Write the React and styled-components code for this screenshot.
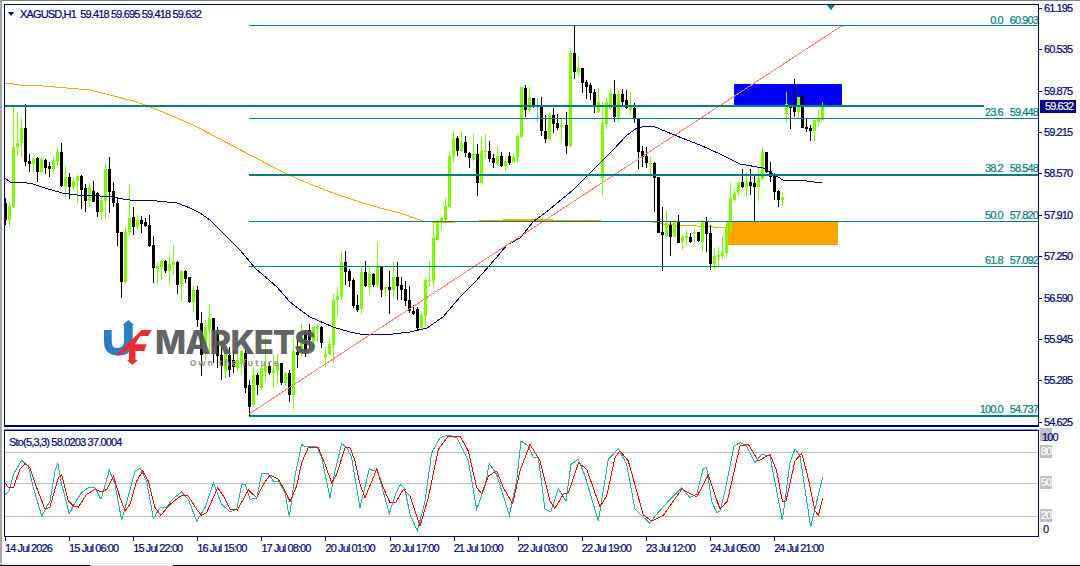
import React from "react";
import styled, { createGlobalStyle } from "styled-components";

const GlobalStyle = createGlobalStyle`
  html, body { margin: 0; padding: 0; background: #fff; }
  body { font-family: "Liberation Sans", Arial, sans-serif; overflow: hidden; }
`;

const NAVY = "#000080";
const TEAL = "#008080";
const GREEN = "#7cfc00";

/* ---------- data: [high, bodyTop, bodyBottom, low, colour] as read from the reference ---------- */
const seg = (off, rows) => rows.map((r) => [off + r[0] / 3, off + r[1] / 3, off + r[2] / 3, off + r[3] / 3, r[4]]);

const candles = [
  ...seg(0, [
    [595,608,660,675,0],[605,618,660,680,1],[315,440,620,625,1],[335,430,440,468,1],[355,383,430,470,1],
    [312,383,485,497,0],[462,483,491,515,0],[475,477,491,515,1],[470,475,515,545,0],[470,477,515,520,1],
    [478,480,505,522,0],[485,497,507,530,0],[472,483,507,520,1],[445,455,485,497,1],[430,455,558,560,0],
    [497,530,558,590,1],[520,530,560,598,0],[530,543,562,570,1],[525,528,543,608,1],[525,528,570,628,0],
    [552,563,603,635,0],[548,562,603,622,1],[543,573,605,607,0],[575,578,635,650,0],[590,600,635,660,1],
    [490,507,602,660,1],[472,507,575,640,0],[545,573,608,620,0],[590,608,700,738,0],
  ]),
  ...seg(220, [
    [35,35,185,235,0],[20,35,187,190,1],[-108,-7,35,45,1],[-40,-10,22,45,0],[-15,0,22,30,1],[-12,0,12,38,0],
    [-5,5,18,22,0],[-15,15,78,82,0],[48,75,145,190,0],[125,137,147,193,1],[120,122,142,180,1],[120,123,152,160,0],
    [105,132,152,195,1],[75,125,135,165,1],[122,125,195,222,0],[150,152,193,243,1],[150,153,178,190,0],
    [170,172,245,250,0],[197,210,245,275,1],[197,210,300,320,0],[275,310,405,467,0],[300,320,385,420,1],
    [252,295,330,395,1],[295,295,380,430,0],[320,340,408,445,0],[380,405,438,480,0],[390,400,452,475,1],
    [380,405,450,470,0],[390,420,440,460,0],[395,420,445,455,1],[390,392,432,465,1],[390,398,503,520,0],
    [480,495,560,585,0],[440,465,555,560,1],[460,465,495,525,0],[435,445,505,510,1],[350,437,455,485,1],
    [430,437,458,465,0],[405,450,458,505,1],[402,430,452,490,1],[428,430,490,495,0],[455,460,490,495,1],
    [450,460,525,545,0],[350,392,525,567,1],[355,395,405,445,0],[312,350,400,410,1],[330,340,395,410,0],
    [312,330,360,385,0],[320,322,365,385,1],[312,318,328,365,1],[318,320,370,385,0],[380,402,412,440,1],
    [355,372,402,405,1],[222,240,375,430,1],[200,228,240,290,1],[95,125,230,240,1],[93,125,155,195,0],
    [148,152,182,200,0],[175,180,258,265,0],[225,255,270,275,0],
  ]),
  ...seg(170, [
    [290,305,418,432,1],[272,305,348,352,0],[290,312,350,372,1],[310,312,345,350,0],[215,290,345,350,1],
    [290,290,360,380,0],[350,350,358,382,1],[303,350,360,432,0],[275,320,360,380,1],[275,320,348,390,0],
    [320,345,360,390,0],[333,358,392,408,0],[348,390,422,430,0],[405,423,432,435,0],[410,417,473,480,0],
    [430,435,473,480,1],[325,330,437,470,1],[272,329,332,350,1],[155,205,332,350,1],[150,155,210,213,1],
    [142,145,155,180,1],[83,108,150,155,1],
  ]),
  ...seg(0, [
    [452,467,620,622,1],[397,413,470,485,1],[408,413,452,468,0],[395,430,452,455,1],[408,425,460,470,0],
    [455,460,475,503,0],[402,462,477,483,1],[432,462,550,587,0],[415,452,550,550,1],[402,452,455,475,1],
    [423,453,477,485,0],[462,475,490,503,0],[438,468,492,495,1],[455,468,497,500,0],[470,483,497,512,1],
    [455,468,490,495,0],[462,470,487,490,1],[402,407,473,490,1],[262,262,410,413,1],[255,265,330,350,0],
    [262,293,330,338,1],[293,293,320,325,0],[293,315,320,365,2],[292,315,392,408,0],[345,392,417,430,0],
    [340,345,417,420,1],[325,345,372,400,0],[343,368,383,390,0],[358,375,380,425,1],[337,375,437,462,0],
    [148,158,437,442,1],[75,158,215,237,0],[167,205,215,232,1],[203,205,250,278,0],[240,245,260,298,0],
    [250,255,280,300,0],[268,275,320,340,0],[265,305,335,340,1],[305,370,533,585,1],[295,305,372,387,1],
    [268,280,325,330,1],[240,282,350,365,0],[270,282,350,365,1],[268,282,305,315,0],[270,300,325,328,0],
    [275,322,330,345,1],[310,323,358,368,0],[355,358,455,507,0],[437,453,472,500,0],[440,468,490,505,0],
    [472,490,492,530,1],[485,490,533,635,0],[531,531,699,699,0],
  ]),
  ...seg(170, [
    [112,186,194,302,0],[123,160,197,200,1],[155,165,200,258,0],[150,152,200,202,1],[135,155,218,220,0],
    [195,200,215,240,1],[180,198,203,228,1],[190,200,215,218,0],[175,186,188,222,1],[185,185,213,216,0],
    [150,152,215,245,1],[142,155,193,245,0],[165,190,282,300,0],[235,258,282,300,1],[232,255,260,290,1],
    [198,245,258,270,1],[160,170,250,262,1],[40,85,183,190,1],[60,68,90,92,1],[35,38,70,77,1],
  ]),
  ...seg(0, [
    [507,547,562,565,0],[520,545,562,590,1],[507,545,557,585,0],[525,548,562,663,0],[505,535,562,602,1],
    [445,457,537,540,1],[455,457,515,520,0],[487,513,530,545,0],[520,523,575,600,0],[570,573,600,620,0],
    [578,592,600,617,1],[275,312,342,368,1],[320,315,325,387,0],[237,320,335,350,0],[290,292,335,353,1],
    [285,287,383,385,0],[357,380,387,397,0],[375,385,393,422,0],[360,360,392,422,1],[330,355,365,380,1],
    [305,315,360,360,1],
  ]),
];

const candleX = (i) => Math.floor(5.3 + 4 * i + (i >= 140 ? 1 : 0));
const candleFill = ["#000000", GREEN, "#3fdce8"];

const pts = (list) => list.map((p) => p.join(",")).join(" ");
const osc = (offX, list) => list.map(([x, y]) => [offX + x / 3, 420 + y / 3]);

const orangeA = [[5,83],[20,85],[43,86],[67,88],[90,90],[110,95],[133,101],[148,106],[170,115],[193,125],[220,139],[250,155],[283,172],[300,180],[333,193],[360,202],[380,208],[400,213],[423,221]];
const orangeRuns = [
  { x1: 432, x2: 455, y: 222, w: 1 },
  { x1: 479, x2: 503, y: 220, w: 1 },
  { x1: 503, x2: 553, y: 218.5, w: 2 },
  { x1: 553, x2: 601, y: 220, w: 1 },
];
const orangeB = [[653,222],[662,224],[680,225.5],[697,226],[713,227],[728,227.5]];
const navyMA = [[5,178],[10,182],[20,182],[33,184],[45,188],[62,193],[77,195],[100,196],[113,197],[123,199],[130,200],[157,201],[177,203],[190,208],[200,213],[210,220],[223,233],[240,250],[255,268],[277,287],[290,302],[310,317],[333,327],[350,332],[360,334],[377,334],[393,334],[410,332],[427,328],[443,317],[460,297],[475,282],[490,265],[507,245],[520,238],[533,222],[550,209],[573,190],[593,170],[613,150],[627,135],[637,128],[647,126],[653,126],[667,132],[687,140],[700,145],[720,154],[740,164],[763,168],[783,180],[803,180.5],[822,183]];

const tealOsc = [
  ...osc(0, [[15,220],[28,210],[40,160],[65,118],[85,135],[100,200],[125,285],[150,240],[165,150],[173,125],[185,190],[208,278],[225,245],[245,215],[265,200],[285,200],[303,235],[328,148],[345,190],[365,298],[385,225],[405,150],[420,142],[440,180],[460,292],[480,260],[500,258],[520,232],[545,213],[565,235],[590,300],[615,260],[640,185],[665,250],[690,272],[710,265],[725,190],[735,190],[750,235],[770,232],[785,158],[805,158],[820,180],[835,180],[855,215],[868,288],[885,165],[905,70],[915,78],[930,75],[950,75],[965,110],[990,230],[1005,150],[1025,68],[1040,80],[1055,110]]),
  ...osc(360, [[0,260],[28,143],[40,150],[52,145],[65,195],[88,278],[108,215],[122,190],[135,205],[150,280],[172,330],[195,240],[215,95],[240,50],[265,42],[290,50],[325,120],[350,265],[375,195],[388,128],[410,160],[430,225],[448,283],[470,180],[483,60],[505,75],[520,110],[535,110],[555,265],[572,272],[595,203],[618,240],[633,130],[655,115],[675,165],[715,300],[745,115],[775,83],[800,130],[825,265],[870,307],[885,285],[935,230],[965,200],[990,230],[1010,220],[1030,142],[1040,140],[1055,240],[1070,275]]),
  ...osc(720, [[0,270],[15,210],[42,75],[60,65],[80,75],[105,125],[125,100],[150,105],[187,298],[210,125],[225,83],[240,105],[272,318],[308,168]]),
];
const redOsc = [
  ...osc(0, [[15,185],[25,200],[40,200],[60,145],[75,128],[90,140],[110,200],[135,265],[150,258],[175,170],[185,162],[205,240],[220,255],[235,258],[260,220],[285,205],[305,213],[320,205],[340,165],[360,230],[375,270],[390,250],[410,180],[428,150],[445,180],[465,260],[483,283],[510,250],[545,223],[565,225],[590,265],[605,283],[620,275],[653,200],[670,225],[690,265],[712,267],[745,207],[770,230],[790,190],[810,162],[835,175],[850,200],[870,242],[890,195],[905,125],[925,80],[955,80],[975,130],[995,185],[1010,160],[1035,80],[1050,80],[1065,120]]),
  ...osc(360, [[0,190],[15,230],[50,145],[70,200],[90,245],[108,243],[130,205],[150,225],[180,315],[205,230],[235,85],[265,45],[300,45],[325,90],[350,200],[365,218],[385,165],[410,150],[430,200],[458,248],[480,150],[510,70],[540,120],[570,240],[585,262],[610,220],[625,215],[655,125],[680,145],[720,257],[740,225],[765,110],[780,90],[805,120],[850,282],[875,300],[910,283],[965,205],[1010,228],[1045,162]]),
  ...osc(720, [[0,265],[22,240],[60,75],[85,70],[115,120],[150,100],[170,150],[187,240],[198,240],[225,120],[245,97],[262,160],[285,270],[295,283],[308,232]]),
];

const fibLines = [
  { x1: 249, x2: 1038, y: 25, w: 1 },
  { x1: 5, x2: 984, y: 105, w: 2 },
  { x1: 249, x2: 1038, y: 118, w: 1 },
  { x1: 249, x2: 1038, y: 174, w: 2 },
  { x1: 249, x2: 1038, y: 221, w: 1 },
  { x1: 249, x2: 1038, y: 266, w: 1 },
  { x1: 249, x2: 1038, y: 415, w: 2 },
];
const fibLabels = [
  { level: "0.0", price: "60.903", top: 15 },
  { level: "23.6", price: "59.448", top: 107 },
  { level: "38.2", price: "58.548", top: 163 },
  { level: "50.0", price: "57.820", top: 210 },
  { level: "61.8", price: "57.092", top: 255 },
  { level: "100.0", price: "54.737", top: 404 },
];
const priceTicks = ["61.195", "60.535", "59.875", "59.215", "58.570", "57.910", "57.250", "56.590", "55.945", "55.285", "54.625"];
const timeTicks = ["14 Jul 2026", "15 Jul 06:00", "15 Jul 22:00", "16 Jul 15:00", "17 Jul 08:00", "20 Jul 01:00", "20 Jul 17:00", "21 Jul 10:00", "22 Jul 03:00", "22 Jul 19:00", "23 Jul 12:00", "24 Jul 05:00", "24 Jul 21:00"];
const oscLevels = [
  { label: "80", y: 451 },
  { label: "50", y: 482 },
  { label: "20", y: 515 },
];

/* ---------- layout ---------- */
const Window = styled.div`
  width: 1080px;
  height: 566px;
  display: flex;
  flex-direction: column;
  background: #fff;
  overflow: hidden;
  -webkit-text-stroke: 0.2px currentColor;
`;
const Body = styled.div`
  flex: 1;
  min-height: 0;
  border-top: 1px solid #808080;
  border-left: 2px solid #a6a6a6;
  padding: 3px 0 0 2px;
  display: flex;
  flex-direction: column;
`;
const Row = styled.div`
  display: flex;
  flex: none;
  height: ${(p) => p.$height}px;
`;
const Plot = styled.div`
  position: relative;
  flex: none;
  width: 1034px;
  box-sizing: border-box;
  border-top: 1px solid ${NAVY};
  border-left: 1px solid ${NAVY};
  border-bottom: ${(p) => p.$bottom}px solid ${NAVY};
  overflow: hidden;
`;
const PlotSvg = styled.svg`
  display: block;
  position: absolute;
  inset: 0;
`;
const Axis = styled.div`
  position: relative;
  flex: 1;
  border-left: 1px solid ${NAVY};
  color: ${NAVY};
  font-size: 11px;
  letter-spacing: -0.9px;
`;
const Ticks = styled.div`
  display: flex;
  flex-direction: column;
  margin-top: -1px;
`;
const PriceTick = styled.div`
  position: relative;
  flex: none;
  height: 41.37px;
  padding-left: 5px;
  line-height: 11px;
  &::before {
    content: "";
    position: absolute;
    left: 0;
    top: 5px;
    width: 3px;
    height: 1px;
    background: ${NAVY};
  }
`;
const PriceBadge = styled.div`
  position: absolute;
  left: 1px;
  top: 96px;
  width: 36px;
  height: 13px;
  padding-left: 5px;
  box-sizing: border-box;
  background: ${NAVY};
  color: #fff;
  line-height: 13px;
`;
const Separator = styled.div`
  flex: none;
  height: 2px;
  background: #fff;
`;
const OscTop = styled.div`
  flex: none;
  width: 1034px;
  height: 1px;
  background: #8a8ac4;
`;
const OscChip = styled.div`
  position: absolute;
  left: 1px;
  top: ${(p) => p.$top}px;
  width: 12px;
  height: 13px;
  line-height: 13px;
  text-align: center;
  background: #c0c0c0;
  color: #fff;
`;
const OscScale = styled.div`
  position: absolute;
  left: ${(p) => p.$left}px;
  top: ${(p) => p.$top}px;
  line-height: 11px;
`;
const TimeAxis = styled.div`
  flex: none;
  display: grid;
  grid-template-columns: repeat(13, 64.1px);
  padding-left: 1px;
  height: 24px;
  color: ${NAVY};
  font-size: 11px;
  letter-spacing: -0.9px;
`;
const TimeTick = styled.div`
  position: relative;
  padding-top: 6px;
  line-height: 11px;
  white-space: nowrap;
  &::before {
    content: "";
    position: absolute;
    left: 0;
    top: 0;
    width: 1px;
    height: 4px;
    background: ${NAVY};
  }
`;
const Footer = styled.div`
  flex: none;
  height: 1px;
  display: flex;
  gap: 83px;
  background: #e6e6e6;
  box-shadow: 0 -2px 0 #ececec;
`;
const FooterEdge = styled.div`
  flex: ${(p) => (p.$grow ? 1 : "none")};
  width: ${(p) => (p.$grow ? "auto" : "90px")};
  background: #000;
`;
const ChartTitle = styled.div`
  position: absolute;
  left: 3px;
  top: 3px;
  display: flex;
  align-items: center;
  gap: 6px;
  color: ${NAVY};
  font-size: 11px;
  letter-spacing: -0.85px;
  line-height: 12px;
  white-space: pre;
`;
const TitleCaret = styled.span`
  width: 0;
  height: 0;
  border-left: 3.5px solid transparent;
  border-right: 3.5px solid transparent;
  border-top: 4px solid ${NAVY};
`;
const OscTitle = styled.div`
  position: absolute;
  left: 4px;
  top: 5px;
  color: ${NAVY};
  font-size: 11px;
  letter-spacing: -0.82px;
  line-height: 12px;
  white-space: pre;
`;
const FibLabel = styled.div`
  position: absolute;
  right: 0;
  top: ${(p) => p.$top - 5}px;
  display: flex;
  gap: 7px;
  color: ${TEAL};
  font-size: 11px;
  letter-spacing: -0.9px;
  line-height: 10px;
`;
const Logo = styled.div`
  position: absolute;
  left: 99px;
  top: 314px;
  display: flex;
  align-items: flex-start;
  gap: 3px;
  opacity: 0.93;
  -webkit-text-stroke: 0;
`;
const LogoText = styled.div`
  display: flex;
  flex-direction: column;
  align-items: center;
  margin-top: 8px;
`;
const LogoWord = styled.div`
  font-family: Inter, "Liberation Sans", sans-serif;
  font-weight: 800;
  font-size: 33px;
  line-height: 30px;
  letter-spacing: -1px;
  color: #58595b;
`;
const LogoTag = styled.div`
  font-family: "Open Sans", "Liberation Sans", sans-serif;
  font-weight: 700;
  font-size: 8.5px;
  line-height: 10px;
  letter-spacing: 1.8px;
  color: #8d8e90;
  margin-top: 1px;
`;

const UFMark = () => (
  <svg width="48" height="47" viewBox="0 0 48 47">
    <path d="M0 11H7.7V23Q7.7 29 13.5 29Q20 29 20 22V6H18.7L24.3 1L30 6H28.7V22Q28.7 36.5 15 36.5Q0 36.5 0 23Z" fill="#1b75bc" />
    <path d="M37.7 11H47.7L44.3 17H36L31 25.3H42.7L40.3 32H31.5V41H34L28.3 46L23 41H25V30L14.5 36.5H11.5Z" fill="#ed1c24" />
  </svg>
);

export default function App() {
  return (
    <>
      <GlobalStyle />
      <Window>
        <Body>
          <Row $height={423}>
            <Plot $bottom={2}>
              <PlotSvg width="1033" height="420" viewBox="5 5 1033 420">
                <g shapeRendering="crispEdges">
                  <rect x="734" y="84" width="108" height="22" fill="#0000ff" />
                  <rect x="727" y="222" width="111" height="23" fill="#ffa500" />
                  <polyline points={pts(orangeA)} fill="none" stroke="#ffa500" strokeWidth="1" />
                  <polyline points={pts(orangeB)} fill="none" stroke="#ffa500" strokeWidth="1" />
                  {orangeRuns.map((r) => (
                    <rect key={r.x1} x={r.x1} y={r.y} width={r.x2 - r.x1} height={r.w} fill="#ffa500" />
                  ))}
                  {candles.map((c, i) => {
                    const x = candleX(i);
                    return (
                      <g key={i} fill={candleFill[c[4]]}>
                        <rect x={x} y={c[0]} width="1" height={Math.max(c[3] - c[0], 1)} />
                        <rect x={x - 1} y={c[1]} width="3" height={Math.max(c[2] - c[1], 1)} />
                      </g>
                    );
                  })}
                  <polyline points={pts(navyMA)} fill="none" stroke={NAVY} strokeWidth="1" />
                  <line x1="249" y1="414" x2="843" y2="25" stroke="#fa8072" strokeWidth="1" />
                  {fibLines.map((l) => (
                    <rect key={l.y} x={l.x1} y={l.y} width={l.x2 - l.x1} height={l.w} fill={TEAL} />
                  ))}
                  <rect x="249" y="414" width="1" height="2" fill="#000" />
                </g>
                <path d="M827 5H835L831 10Z" fill={TEAL} />
              </PlotSvg>
              <ChartTitle>
                <TitleCaret />
                <span>{"XAGUSD,H1  59.418 59.695 59.418 59.632"}</span>
              </ChartTitle>
              <Logo>
                <UFMark />
                <LogoText>
                  <LogoWord>MARKETS</LogoWord>
                  <LogoTag>Own the future</LogoTag>
                </LogoText>
              </Logo>
              {fibLabels.map((f) => (
                <FibLabel key={f.level} $top={f.top}>
                  <span>{f.level}</span>
                  <span>{f.price}</span>
                </FibLabel>
              ))}
            </Plot>
            <Axis>
              <Ticks>
                {priceTicks.map((t) => (
                  <PriceTick key={t}>{t}</PriceTick>
                ))}
              </Ticks>
              <PriceBadge>59.632</PriceBadge>
            </Axis>
          </Row>
          <Separator />
          <OscTop />
          <Row $height={107}>
            <Plot $bottom={1}>
              <PlotSvg width="1033" height="107" viewBox="5 430 1033 107">
                <g shapeRendering="crispEdges">
                  {oscLevels.map((l) => (
                    <rect key={l.label} x="5" y={l.y} width="1033" height="1" fill="#c0c0c0" />
                  ))}
                  <polyline points={pts(tealOsc)} fill="none" stroke="#20b2aa" strokeWidth="1" />
                  <polyline points={pts(redOsc)} fill="none" stroke="#ff0000" strokeWidth="1" />
                </g>
              </PlotSvg>
              <OscTitle>{"Sto(5,3,3) 58.0203 37.0004"}</OscTitle>
            </Plot>
            <Axis>
              <OscChip $top={-2} />
              <OscScale $left={3} $top={2}>100</OscScale>
              {oscLevels.map((l) => (
                <OscChip key={l.label} $top={l.y - 436}>{l.label}</OscChip>
              ))}
              <OscScale $left={4} $top={94}>0</OscScale>
            </Axis>
          </Row>
          <TimeAxis>
            {timeTicks.map((t) => (
              <TimeTick key={t}>{t}</TimeTick>
            ))}
          </TimeAxis>
        </Body>
        <Footer>
          <FooterEdge />
          <FooterEdge $grow />
        </Footer>
      </Window>
    </>
  );
}
